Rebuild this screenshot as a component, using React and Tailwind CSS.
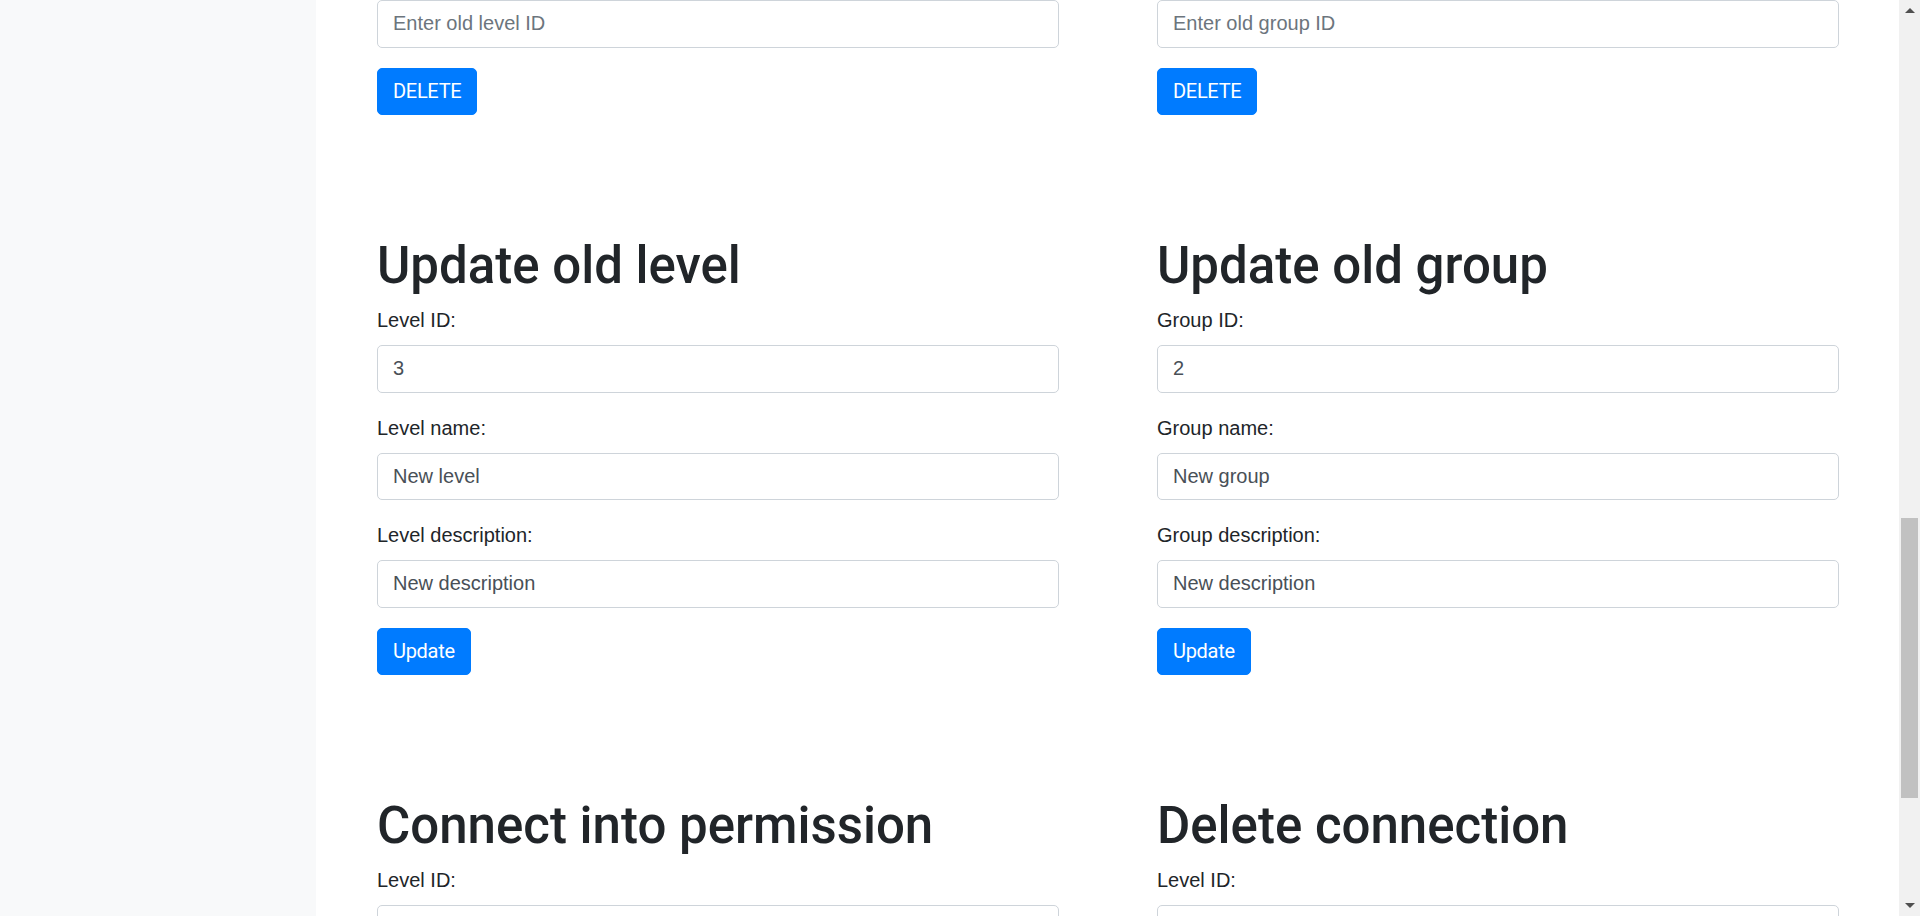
import React from 'react'

const font = { fontFamily: '"Liberation Sans", Arial, sans-serif' }

const Field = ({ label, value, placeholder }) => (
  <div className="mb-5">
    {label && <label className="block mb-[10px] text-[20px] leading-[30px] text-[#212529]">{label}</label>}
    <input
      readOnly
      defaultValue={value}
      placeholder={placeholder}
      className="block w-full h-[47.5px] px-[15px] py-[7.5px] text-[20px] leading-[30px] text-[#495057] placeholder:text-[#6c757d] bg-white border border-[#ced4da] rounded-[5px] outline-none"
    />
  </div>
)

const Button = ({ children }) => (
  <button className="h-[47.5px] px-[15px] text-[20px] leading-[30px] text-white bg-[#007bff] border border-[#007bff] rounded-[5px] font-['Roboto',sans-serif] tracking-[-0.3px]">
    {children}
  </button>
)

const Heading = ({ children }) => (
  <h1 className="mb-[10px] pt-[2px] h-[60px] text-[51px] leading-[58px] font-medium text-[#212529] font-['Roboto',sans-serif]">{children}</h1>
)

const Scrollbar = () => (
  <div className="w-[21px] h-full bg-[#f1f1f1] flex flex-col items-center">
    <div className="h-[21px] flex items-center justify-center">
      <div className="w-0 h-0 border-l-[5px] border-r-[5px] border-b-[5px] border-l-transparent border-r-transparent border-b-[#505050]"></div>
    </div>
    <div className="h-[497px]"></div>
    <div className="w-[17px] h-[280px] bg-[#c1c1c1]"></div>
    <div className="flex-1"></div>
    <div className="h-[21px] flex items-center justify-center">
      <div className="w-0 h-0 border-l-[5px] border-r-[5px] border-t-[5px] border-l-transparent border-r-transparent border-t-[#505050]"></div>
    </div>
  </div>
)

export default function App() {
  return (
    <div className="flex w-[1920px] h-[916px] overflow-hidden bg-white" style={font}>
      {/* Sidebar */}
      <div className="w-[316px] shrink-0 bg-[#f8f9fa]"></div>

      {/* Main */}
      <div className="flex-1 pl-[61px] pr-[60px] overflow-hidden">
        {/* Delete row */}
        <div className="grid grid-cols-2 gap-x-[98px]">
          <div>
            <Field placeholder="Enter old level ID" />
            <Button>DELETE</Button>
          </div>
          <div>
            <Field placeholder="Enter old group ID" />
            <Button>DELETE</Button>
          </div>
        </div>

        {/* Update row */}
        <div className="grid grid-cols-2 gap-x-[98px] mt-[120px]">
          <div>
            <Heading>Update old level</Heading>
            <Field label="Level ID:" value="3" />
            <Field label="Level name:" value="New level" />
            <Field label="Level description:" value="New description" />
            <Button>Update</Button>
          </div>
          <div>
            <Heading>Update old group</Heading>
            <Field label="Group ID:" value="2" />
            <Field label="Group name:" value="New group" />
            <Field label="Group description:" value="New description" />
            <Button>Update</Button>
          </div>
        </div>

        {/* Connection row */}
        <div className="grid grid-cols-2 gap-x-[98px] mt-[120px]">
          <div>
            <Heading>Connect into permission</Heading>
            <Field label="Level ID:" value="" />
          </div>
          <div>
            <Heading>Delete connection</Heading>
            <Field label="Level ID:" value="" />
          </div>
        </div>
      </div>

      <Scrollbar />
    </div>
  )
}
